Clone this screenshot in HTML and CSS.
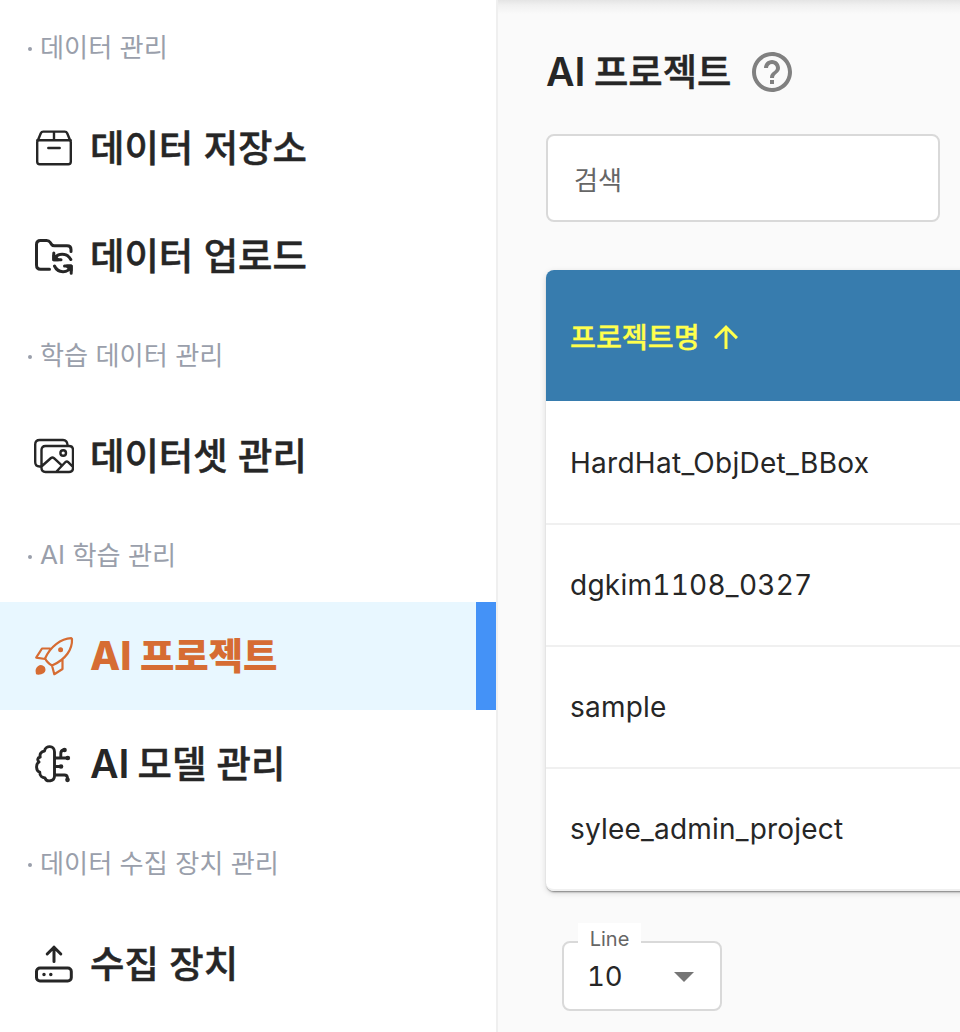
FILE: index.html
```html
<!DOCTYPE html>
<html lang="ko">
<head>
<meta charset="utf-8">
<title>AI 프로젝트</title>
<link rel="stylesheet" href="styles.css">
</head>
<body>
<div class="app">
  <nav class="sidebar">
    <h2 class="group"><i class="dot"></i>데이터 관리</h2>
    <a class="item">
      <svg class="icon" viewBox="0 0 40 40"><path d="M3.2 14 6.8 5.2Q7.5 3.600 9.2 3.600H30.8Q32.500 3.600 33.200 5.2L36.8 14V33.8Q36.8 36.3 34.3 36.3H5.7Q3.2 36.3 3.2 33.8ZM3.2 12.300H36.8M20 4V12M14.3 20H25.7"/></svg>
      <span class="label">데이터 저장소</span>
    </a>
    <a class="item">
      <svg class="icon bold" viewBox="0 0 40 40"><path d="M15.5 33.3H6.5Q2.5 33.3 2.5 29V8.500Q2.5 4.500 6.5 4.500H12.5Q15 4.500 16.3 6.500L17.5 8.3Q18.5 9.800 20.5 9.800H33Q37 9.800 37 13.500V15.500M19.800 17V23.800H27M20.5 23.500C23 16.500 33 16.500 36.8 23.500M37.200 37.200V30H30.5M20.5 30C24 37.500 34 37.500 37 30.500"/><path class="solid" d="M19.800 19.500V23.800H24ZM37.200 34.500V30H33Z"/></svg>
      <span class="label">데이터 업로드</span>
    </a>
    <h2 class="group"><i class="dot"></i>학습 데이터 관리</h2>
    <a class="item">
      <svg class="icon" viewBox="0 0 40 40"><path d="M7.5 30.500H5.5Q1.2 30.500 1.2 26V8.500Q1.2 4 5.7 4H29Q33.2 4 33.7 9.500M11.5 10H35Q39 10 39 14V32Q39 36 35 36H11.5Q7.5 36 7.5 32V14Q7.5 10 11.5 10M8 30 17 22Q18.5 21 20 22.2L28 29.700M22.5 35.5 31.5 26Q33 25 34.2 26.2L38.5 30.5"/><circle cx="29.2" cy="17" r="2.8"/></svg>
      <span class="label">데이터셋 관리</span>
    </a>
    <h2 class="group"><i class="dot"></i><span class="latin">AI</span> 학습 관리</h2>
    <a class="item active">
      <svg class="icon rocket" viewBox="0 0 40 40"><path d="M11.2 22.3C16 11 27 2.5 37.3 2.2L38 3C38.5 13 32 23.5 18 29.5Q12.5 26 11.2 22.3ZM16 12.5H8L2.2 21.6 11 23M18 29.5 20.3 38.2 28.5 33V23.5"/><circle class="solid" cx="26.6" cy="13.8" r="1.4"/><path class="solid" d="M3 37.5C1.3 31.5 6.5 28.5 9.8 31.5 12 36 7.5 38 3 37.5Z"/></svg>
      <span class="label"><span class="latin">AI</span> 프로젝트</span>
    </a>
    <a class="item">
      <svg class="icon brain" viewBox="0 0 40 40"><path d="M20.5 8C20.5 1 11.5 1 10.5 7 7 7.5 5.5 10 6.2 13 3 14 3.3 16.3 5 18 1.5 20 1.8 27 5.8 28.2 5.5 32 8.5 33.8 11 34 12.5 38.5 20.5 37.5 20.5 32ZM20.5 14H33.5M20.5 22.5H27M20.5 31H30.5Q33.3 31 33.5 34M26.8 14V9.5Q26.8 6.5 29.5 6"/><g class="solid"><circle cx="30.5" cy="6" r=".9"/><circle cx="33.8" cy="14" r=".9"/><circle cx="27" cy="22.5" r=".9"/><circle cx="33.5" cy="35.8" r=".9"/></g></svg>
      <span class="label model"><span class="latin">AI</span> 모델 관리</span>
    </a>
    <h2 class="group"><i class="dot"></i>데이터 수집 장치 관리</h2>
    <a class="item">
      <svg class="icon bold" viewBox="0 0 40 40"><path d="M20 17.5V3M13.2 10 20 3.2 26.8 10"/><rect x="2.5" y="24" width="34.8" height="13" rx="3.5"/><g class="solid thin"><circle cx="10" cy="30.5" r="1"/><circle cx="16.8" cy="30.5" r="1"/></g></svg>
      <span class="label">수집 장치</span>
    </a>
  </nav>
  <main class="content">
    <header class="heading">
      <h1 class="title"><span class="latin">AI</span> 프로젝트</h1>
      <svg class="help" viewBox="2 2 20 20"><path d="M11 18h2v-2h-2v2zm1-16C6.48 2 2 6.48 2 12s4.480 10 10 10 10-4.480 10-10S17.520 2 12 2zm0 18c-4.410 0-8-3.590-8-8s3.590-8 8-8 8 3.590 8 8-3.590 8-8 8zm0-14c-2.210 0-4 1.790-4 4h2c0-1.100.900-2 2-2s2 .900 2 2c0 2-3 1.750-3 5h2c0-2.250 3-2.500 3-5 0-2.210-1.790-4-4-4z"/></svg>
    </header>
    <div class="search">검색</div>
    <section class="table">
      <div class="table-head"><span>프로젝트명</span><svg class="sort" viewBox="4 4 16 16"><path d="M4 12l1.410 1.410L11 7.830V20h2V7.830l5.580 5.590L20 12l-8-8-8 8z"/></svg></div>
      <div class="row">HardHat_ObjDet_BBox</div>
      <div class="row numeric">dgkim1108_0327</div>
      <div class="row">sample</div>
      <div class="row">sylee_admin_project</div>
    </section>
    <div class="select">
      <span class="select-label">Line</span>
      <span class="select-value">10</span>
      <svg class="caret" viewBox="0 0 20 10"><path d="M0 0H20L10 10Z"/></svg>
    </div>
  </main>
</div>
</body>
</html>
```
FILE: styles.css
```css
* { box-sizing: border-box; }
body {
  margin: 0;
  background: #fafafa;
  color: #262626;
  font-family: "Noto Sans CJK KR", sans-serif;
}
h1, h2 { margin: 0; }
.latin { font-family: Inter, sans-serif; font-size: 1.05em; margin-right: -2px; }
.app { display: flex; width: 960px; height: 1032px; overflow: hidden; }

/* Sidebar */
.sidebar {
  flex: 0 0 498px;
  padding-top: 2px;
  background: #fff;
  border-right: 2px solid #efefef;
}
.group {
  display: flex;
  align-items: center;
  height: 92px;
  padding: 0 0 5px 28px;
  white-space: pre;
  font-size: 26.200px;
  font-weight: 400;
  color: #9a9fab;
}
.group .latin { font-size: 1em; margin-right: 0; position: relative; top: 1px; }
.dot { width: 4px; height: 4px; margin: 6px 8px 0 0; border-radius: 50%; background: #9a9fab; }
.item { display: flex; align-items: center; height: 108px; padding-left: 34px; }
.icon {
  width: 40px;
  height: 40px;
  margin-right: 16px;
  fill: none;
  stroke: currentColor;
  stroke-width: 2.4;
  stroke-linecap: round;
  stroke-linejoin: round;
}
.icon.bold { stroke-width: 3; }
.icon.brain { stroke-width: 2.9; }
.icon.rocket { stroke-width: 2.2; }
.icon .solid { fill: currentColor; }
.icon .thin { stroke-width: 1.5; }
.label {
  padding-bottom: 4px;
  font-size: 37.400px;
  font-weight: 500;
  line-height: 54px;
  white-space: nowrap;
  -webkit-text-stroke: .5px currentColor;
}
.label.model { padding-bottom: 2px; letter-spacing: -.1px; }
.label .latin, .title .latin { font-weight: 600; -webkit-text-stroke: 0; }
.active { color: #d66c33; background: #e8f7ff; border-right: 20px solid #4492f7; }
.active .label, .active .latin { font-weight: 800; }
.active .label { padding-bottom: 2px; -webkit-text-stroke: 0; }

/* Main area */
.content {
  flex: 1;
  padding: 44px 0 0 48px;
  background: linear-gradient(#e4e4e4 0, #f0f0f0 5px, #fafafa 14px);
}
.heading { display: flex; align-items: center; height: 56px; }
.title {
  width: 186px;
  padding-bottom: 3px;
  font-size: 37.400px;
  font-weight: 500;
  line-height: 56px;
  white-space: nowrap;
  -webkit-text-stroke: .5px currentColor;
}
.help { width: 40px; height: 40px; margin-left: 20px; fill: #808080; }
.search {
  width: 394px;
  height: 88px;
  margin-top: 34px;
  padding-left: 26px;
  border: 2px solid #d9d9d9;
  border-radius: 8px;
  background: #fff;
  color: #666;
  font-size: 26.200px;
  line-height: 86px;
}
.table {
  width: 430px;
  margin-top: 48px;
  border-radius: 8px;
  background: #fff;
  box-shadow: 0 2px 2px -1px rgba(0,0,0,.45), 0 2px 6px rgba(0,0,0,.14);
}
.table-head {
  display: flex;
  align-items: center;
  height: 131px;
  padding: 0 24px;
  border-radius: 8px 0 0;
  background: #377cae;
  color: #ffff4d;
  font-size: 28.200px;
  font-weight: 500;
  -webkit-text-stroke: .3px currentColor;
}
.sort { width: 24px; height: 24px; margin-left: 14px; margin-top: 3px; fill: currentColor; }
.row {
  height: 122px;
  padding-left: 24px;
  border-bottom: 2px solid #f0f0f0;
  font: 400 28px/120px Inter, sans-serif;
  letter-spacing: .2px;
}
.row:nth-child(2) { height: 124px; line-height: 124px; letter-spacing: .28px; }
.row.numeric { font-variant-numeric: tabular-nums; letter-spacing: .25px; }
.row:last-child { border-radius: 0 0 0 8px; }
.select {
  position: relative;
  display: flex;
  align-items: center;
  justify-content: space-between;
  width: 160px;
  height: 70px;
  margin: 50px 0 0 16px;
  padding: 0 26px 0 24px;
  border: 2px solid #d9d9d9;
  border-radius: 8px;
  background: #fff;
  font-family: Inter, sans-serif;
  font-size: 28px;
}
.select-value { margin-left: -1px; font-size: 27.500px; font-variant-numeric: tabular-nums; }
.select-label {
  position: absolute;
  top: -20px;
  left: 14px;
  width: 63px;
  height: 32px;
  background: #fff;
  color: #666;
  font-size: 20px;
  line-height: 33px;
  text-align: center;
}
.caret { width: 20px; height: 10px; margin-top: 1px; fill: #757575; }
```
